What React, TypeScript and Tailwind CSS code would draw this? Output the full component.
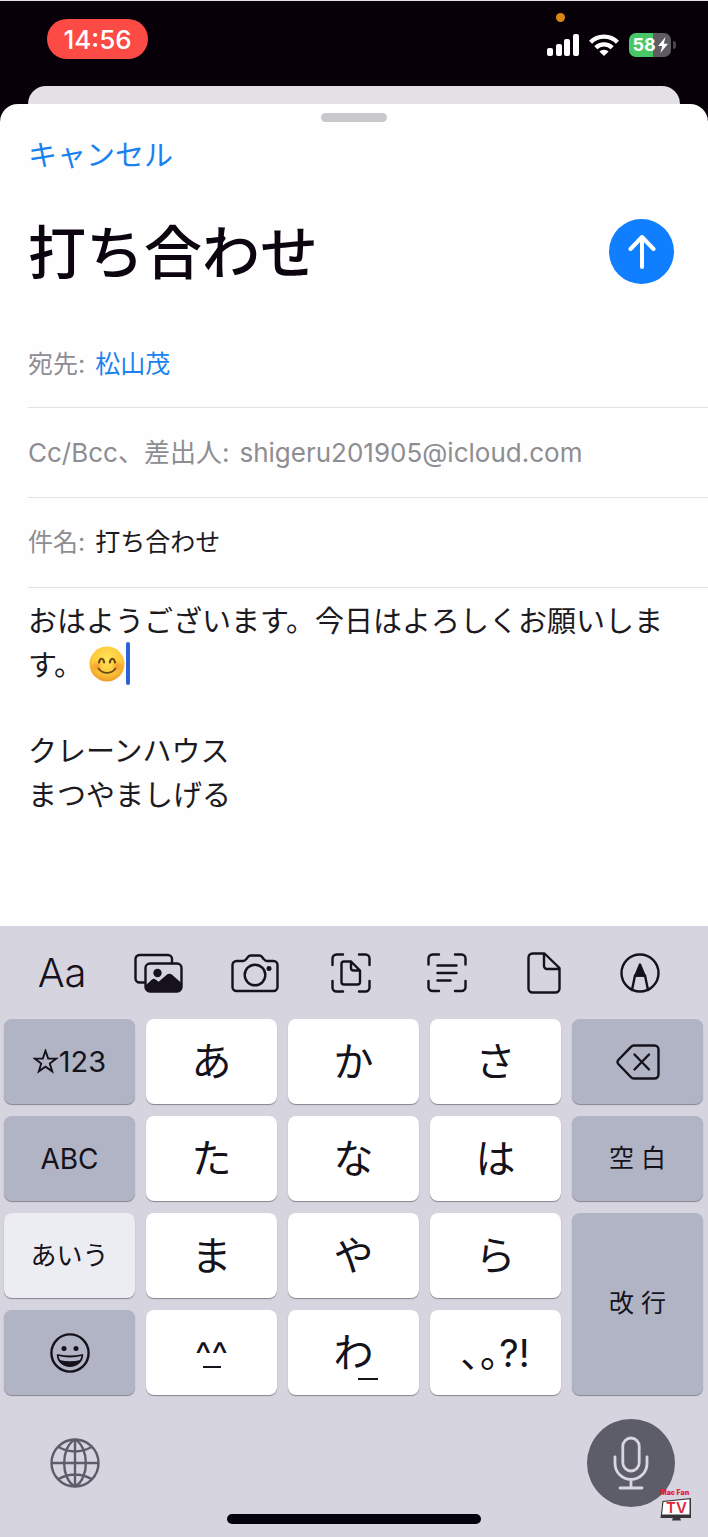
import React from 'react';
import clsx from 'clsx';

interface KeyProps {
  label: string;
  tone?: 'white' | 'gray' | 'light';
  className?: string;
  children: React.ReactNode;
}

const tones = {
  white: 'bg-white',
  gray: 'bg-[#b0b4c4]',
  light: 'bg-[#ecedf2]',
};

const Key: React.FC<KeyProps> = ({ label, tone = 'white', className, children }) => (
  <button
    type="button"
    aria-label={label}
    className={clsx(
      'relative flex items-center justify-center rounded-lg shadow-[0_1px_1px_#85858d]',
      tones[tone],
      className
    )}
  >
    {children}
  </button>
);

const KanaKey: React.FC<{ kana: string }> = ({ kana }) => (
  <Key label={kana}>
    <span className="text-[40px] leading-none">{kana}</span>
  </Key>
);

const StatusIcons = () => (
  <div className="relative flex items-center gap-2.5 pt-1.5">
    <span className="absolute left-[9px] -top-3.5 h-[9px] w-[9px] rounded-full bg-[#d98616]" />
    <svg width="32" height="22" viewBox="0 0 32 22" fill="#fff" aria-label="電波">
      <rect x="0" y="14" width="6" height="8" rx="2" />
      <rect x="9" y="10" width="6" height="12" rx="2" />
      <rect x="17" y="5" width="6" height="17" rx="2" />
      <rect x="26" y="0" width="6" height="22" rx="2" />
    </svg>
    <svg width="30" height="22" viewBox="0 0 30 22" fill="none" stroke="#fff" strokeWidth="4.400" aria-label="Wi-Fi">
      <path d="M1.500 8.300a19 19 0 0 1 27 0" />
      <path d="M6.800 13.800a11.600 11.600 0 0 1 16.400 0" />
      <path d="M15 22l-4.600-4.400a6.500 6.500 0 0 1 9.200 0z" fill="#fff" stroke="none" />
    </svg>
    <div className="flex items-center gap-0.5">
      <div className="flex h-6 w-[42px] items-center justify-center gap-0.5 rounded-[7px] bg-linear-to-r from-[#47c765] from-58% to-[#5f5b62] to-58% text-white">
        <span className="text-lg font-bold leading-none">58</span>
        <svg width="10" height="16" viewBox="0 0 10 16" fill="#fff" aria-hidden="true">
          <path d="M7.500 0L0 9h4.200L2.400 16 10 6.800H5.800z" />
        </svg>
      </div>
      <span className="h-2 w-[3px] rounded-r-full bg-[#4a464d]" />
    </div>
  </div>
);

const SmileEmoji = () => (
  <svg className="ml-1.5 mt-0.5 inline-block align-top" width="36" height="36" viewBox="0 0 36 36" role="img" aria-label="😊">
    <defs>
      <radialGradient id="face" cx="0.5" cy="0.35" r="0.65">
        <stop offset="0" stopColor="#ffe45a" />
        <stop offset="0.65" stopColor="#fdc93a" />
        <stop offset="1" stopColor="#ee9a28" />
      </radialGradient>
      <radialGradient id="cheek">
        <stop offset="0" stopColor="#f58a2c" stopOpacity="0.8" />
        <stop offset="1" stopColor="#f58a2c" stopOpacity="0" />
      </radialGradient>
    </defs>
    <circle cx="18" cy="18" r="17.5" fill="url(#face)" />
    <circle cx="7.5" cy="20.5" r="6" fill="url(#cheek)" />
    <circle cx="28.5" cy="20.5" r="6" fill="url(#cheek)" />
    <g fill="none" stroke="#6e4a12" strokeWidth="2.2" strokeLinecap="round">
      <path d="M10 16.5c.8-5 4.4-5 5.2 0" />
      <path d="M20.8 16.5c.8-5 4.4-5 5.2 0" />
      <path d="M9.5 22.5c4 5.8 13 5.8 17 0" strokeWidth="1.9" />
    </g>
  </svg>
);

const stroke = {
  fill: 'none',
  stroke: '#15121c',
  strokeWidth: 2.4,
  strokeLinecap: 'round' as const,
  strokeLinejoin: 'round' as const,
};

const tools = [
  { label: '書式', icon: <span className="text-[40px] font-light leading-none">Aa</span> },
  {
    label: '写真',
    icon: (
      <svg width="49" height="40" viewBox="0 0 49 40" {...stroke}>
        <path d="M10 29.500H5.500a4 4 0 0 1-4-4V6a4 4 0 0 1 4-4H34a4 4 0 0 1 4 4v4" />
        <rect x="11.500" y="10.500" width="36" height="28" rx="4.500" />
        <circle cx="23.500" cy="20" r="4.200" fill="#15121c" stroke="none" />
        <path d="M12 32l6-5.500q1.800-1.300 3.600 0l3 2.300 7.800-6.800q3-2.400 6 0l9 8v5.500a3 3 0 0 1-3 3H15a3 3 0 0 1-3-3z" fill="#15121c" stroke="none" />
      </svg>
    ),
  },
  {
    label: 'カメラ',
    icon: (
      <svg width="48" height="40" viewBox="0 0 48 40" {...stroke}>
        <path d="M5.500 8H12q2 0 3.200-1.800l1.500-2Q18 2.500 20 2.500h8q2 0 3.300 1.700l1.500 2Q34 8 36 8h6.500a4 4 0 0 1 4 4v22a4 4 0 0 1-4 4h-37a4 4 0 0 1-4-4V12a4 4 0 0 1 4-4z" />
        <circle cx="24" cy="22" r="10.300" />
        <circle cx="38" cy="15.500" r="2.500" fill="#15121c" stroke="none" />
      </svg>
    ),
  },
  {
    label: '書類をスキャン',
    icon: (
      <svg width="40" height="40" viewBox="0 0 40 40" {...stroke}>
        <path d="M1.500 12V5.500a4 4 0 0 1 4-4H12M28 1.500h6.500a4 4 0 0 1 4 4V12M38.500 28v6.500a4 4 0 0 1-4 4H28M12 38.500H5.500a4 4 0 0 1-4-4V28" />
        <path d="M13 8.500h7l9 9V29a2.500 2.500 0 0 1-2.500 2.500H13a2.500 2.500 0 0 1-2.500-2.500V11A2.500 2.500 0 0 1 13 8.500zM20 8.500V15a2.500 2.500 0 0 0 2.500 2.500H29" />
      </svg>
    ),
  },
  {
    label: 'テキストをスキャン',
    icon: (
      <svg width="40" height="40" viewBox="0 0 40 40" {...stroke}>
        <path d="M1.500 11.500V5.500a4 4 0 0 1 4-4H12M28 1.500h6.500a4 4 0 0 1 4 4v6M38.500 28v6a4 4 0 0 1-4 4H28M12 38H5.500a4 4 0 0 1-4-4v-6" />
        <path d="M10.500 12.500h19M10.500 20h19M10.500 27.500h13" />
      </svg>
    ),
  },
  {
    label: '書類を添付',
    icon: (
      <svg width="34" height="42" viewBox="0 0 34 42" {...stroke}>
        <path d="M5.500 1.500h12L32.500 16v20.500a4 4 0 0 1-4 4h-23a4 4 0 0 1-4-4v-31a4 4 0 0 1 4-4zM17 1.500V14a3 3 0 0 0 3 3h12.500" />
      </svg>
    ),
  },
  {
    label: 'マークアップ',
    icon: (
      <svg width="40" height="40" viewBox="0 0 40 40" {...stroke}>
        <circle cx="20" cy="20" r="18.500" />
        <path d="M12 37l3-14.500h10L28 37" />
        <path d="M20 11.500l4.500 11h-9z" fill="#15121c" />
      </svg>
    ),
  },
];

const Keyboard = () => (
  <div className="bg-[#d6d4df] text-[#15121c]">
    <div className="grid h-[93px] grid-cols-7 items-center pl-3.5 pr-5">
      {tools.map((tool) => (
        <button key={tool.label} type="button" aria-label={tool.label} className="flex h-full items-center justify-center">
          {tool.icon}
        </button>
      ))}
    </div>

    <div className="grid auto-rows-[85px] grid-cols-5 gap-x-[11px] gap-y-3 pl-1 pr-[5px]">
      <Key label="☆123" tone="gray">
        <svg width="26" height="25" viewBox="0 0 26 25" {...stroke} strokeWidth="1.9" strokeLinejoin="miter">
          <path d="M12.500 1.800l2.700 7.800h8l-6.400 4.900 2.400 7.900-6.700-4.700-6.700 4.700 2.400-7.900L1.800 9.600h8z" />
        </svg>
        <span className="text-[29px]">123</span>
      </Key>
      <KanaKey kana="あ" />
      <KanaKey kana="か" />
      <KanaKey kana="さ" />
      <Key label="削除" tone="gray">
        <svg width="44" height="36" viewBox="0 0 44 36" {...stroke}>
          <path d="M18 1.500h20.500a4 4 0 0 1 4 4v25a4 4 0 0 1-4 4H18q-1.800 0-3-1.300L2.300 20q-1.600-2 0-4L15 2.800q1.200-1.300 3-1.300z" />
          <path d="M18.500 10.500l14.500 15M33 10.500l-14.500 15" />
        </svg>
      </Key>

      <Key label="ABC" tone="gray">
        <span className="text-[28px]">ABC</span>
      </Key>
      <KanaKey kana="た" />
      <KanaKey kana="な" />
      <KanaKey kana="は" />
      <Key label="空白" tone="gray">
        <span className="text-[25px]">空 白</span>
      </Key>

      <Key label="あいう" tone="light">
        <span className="text-[26px]">あいう</span>
      </Key>
      <KanaKey kana="ま" />
      <KanaKey kana="や" />
      <KanaKey kana="ら" />
      <Key label="改行" tone="gray" className="row-span-2">
        <span className="text-[25px]">改 行</span>
      </Key>

      <Key label="絵文字" tone="gray">
        <svg width="42" height="42" viewBox="0 0 42 42" {...stroke}>
          <circle cx="21" cy="21" r="18.600" />
          <circle cx="15" cy="16.500" r="2.500" fill="#15121c" stroke="none" />
          <circle cx="27" cy="16.500" r="2.500" fill="#15121c" stroke="none" />
          <path d="M8.700 23q12.300 3 24.600 0c0 6-5.500 11-12.300 11S8.700 29 8.700 23z" strokeWidth="1.800" />
          <path d="M10.500 28q10.500 2.500 21 0c-2 3.500-6 5.500-10.500 5.500s-8.500-2-10.500-5.500z" fill="#15121c" stroke="none" />
        </svg>
      </Key>
      <Key label="顔文字" className="flex-col">
        <span className="h-7 text-[35px] leading-8">^^</span>
        <span className="h-0.5 w-[18px] bg-[#15121c]" />
      </Key>
      <Key label="わ">
        <span className="text-[40px] leading-none">わ</span>
        <span className="absolute bottom-[15px] left-[70px] h-0.5 w-5 bg-[#15121c]" />
      </Key>
      <Key label="句読点">
        <span className="text-[38px] leading-none">､｡?!</span>
      </Key>
    </div>

    <div className="flex items-center justify-between pl-[50px] pr-[33px] pt-6">
      <button type="button" aria-label="次のキーボード">
        <svg width="50" height="50" viewBox="0 0 50 50" fill="none" stroke="#5d5c68" strokeWidth="2.400">
          <circle cx="25" cy="25" r="23.500" />
          <path d="M25 1.500v47M1.500 25h47M8.500 9q16.500 9 33 0M8.500 41q16.500-9 33 0" />
          <path d="M25 1.500C10.500 9 10.500 41 25 48.500M25 1.500C39.500 9 39.500 41 25 48.500" />
        </svg>
      </button>
      <div className="relative">
        <button type="button" aria-label="音声入力" className="flex h-[88px] w-[88px] items-center justify-center rounded-full bg-[#5d5d69]">
          <svg width="36" height="54" viewBox="0 0 36 54" fill="none" stroke="#d8d7e0" strokeWidth="2.800" strokeLinecap="round">
            <rect x="9.800" y="2" width="16.400" height="33" rx="8.200" />
            <path d="M2 21v6.500a16 16 0 0 0 32 0V21M18 43.500V52M7 52h22" />
          </svg>
        </button>
        <div className="absolute left-[73px] top-[70px] w-8 text-[#e0243c]">
          <p className="whitespace-nowrap text-[7px] font-black leading-2">Mac Fan</p>
          <svg width="32" height="24" viewBox="0 0 32 24" aria-label="TV">
            <path d="M2.500 4L31 1v20H.5z" fill="#38343a" />
            <path d="M3.500 5L29.500 2.200V17.500H2z" fill="#fff" />
            <path d="M13 20.500h7l1 3h-9z" fill="#38343a" />
            <text x="6" y="15.800" fontSize="15" fontWeight="600" fill="currentColor">TV</text>
          </svg>
        </div>
      </div>
    </div>
    <div className="flex justify-center pb-[13px] pt-[7px]">
      <span className="h-2.5 w-[254px] rounded-full bg-[#04020c]" />
    </div>
  </div>
);

export default function App() {
  return (
    <div lang="ja" className="flex min-h-screen flex-col border-t border-[#e4e4e4] bg-[#080009] font-['Inter','Noto_Sans_CJK_JP',sans-serif] text-[#1c1920]">
      <header className="flex h-[85px] items-start justify-between pl-[47px] pr-8 pt-[18px]">
        <div className="flex h-10 w-[101px] items-center justify-center rounded-full bg-[#fc4b45] text-[26px] font-medium text-white">
          14:56
        </div>
        <div className="pt-2">
          <StatusIcons />
        </div>
      </header>
      <div className="mx-7 h-[18px] rounded-t-[18px] bg-[#e3e1e5]" />

      <main className="flex grow flex-col overflow-hidden rounded-t-[18px] bg-[#fefefe]">
        <div className="mx-auto mt-[9px] h-[9px] w-[66px] rounded-full bg-[#c9c8cc]" />
        <div className="mt-3 px-7">
          <button type="button" className="block text-[29px] leading-11 text-[#1a82f0]">キャンセル</button>
        </div>

        <div className="mb-[34px] mt-[41px] flex items-center justify-between pl-7 pr-[34px]">
          <h1 className="pt-1 text-[58px] font-medium leading-[61px] text-[#0c0510]">打ち合わせ</h1>
          <button type="button" aria-label="送信" className="flex h-[65px] w-[65px] items-center justify-center rounded-full bg-[#0f7fff]">
            <svg width="28" height="36" viewBox="0 0 28 36" fill="none" stroke="#fff" strokeWidth="4" strokeLinecap="round" strokeLinejoin="round">
              <path d="M14 33V3M2.500 15L14 3l11.500 12" />
            </svg>
          </button>
        </div>

        <div className="pl-7 text-[25px] text-[#8e8d92]">
          <div className="flex h-[90px] items-center gap-2.5 border-b border-[#e3e3e5] pt-1">
            <span>宛先:</span>
            <a href="#recipient" className="text-[#1a82f0]">松山茂</a>
          </div>
          <div className="flex h-[90px] items-center gap-2.5 border-b border-[#e3e3e5] text-[26px]">
            <span>Cc/Bcc、差出人:</span>
            <span>shigeru201905@icloud.com</span>
          </div>
          <div className="flex h-[90px] items-center gap-2.5 border-b border-[#e3e3e5]">
            <label htmlFor="subject">件名:</label>
            <input id="subject" type="text" defaultValue="打ち合わせ" className="min-w-0 grow text-[#1c1920] outline-none" />
          </div>
        </div>

        <div
          role="textbox"
          aria-label="本文"
          aria-multiline="true"
          contentEditable
          suppressContentEditableWarning
          className="grow px-7 pb-24 pt-3 text-[29px] leading-11 outline-none"
        >
          <p>
            おはようございます。今日はよろしくお願いします。
            <SmileEmoji />
            <span className="-mt-0.5 ml-px inline-block h-[43px] w-1 rounded-full bg-[#2c62d8] align-top" />
          </p>
          <p className="mt-[42px]">クレーンハウス</p>
          <p>まつやましげる</p>
        </div>
      </main>

      <Keyboard />
    </div>
  );
}
